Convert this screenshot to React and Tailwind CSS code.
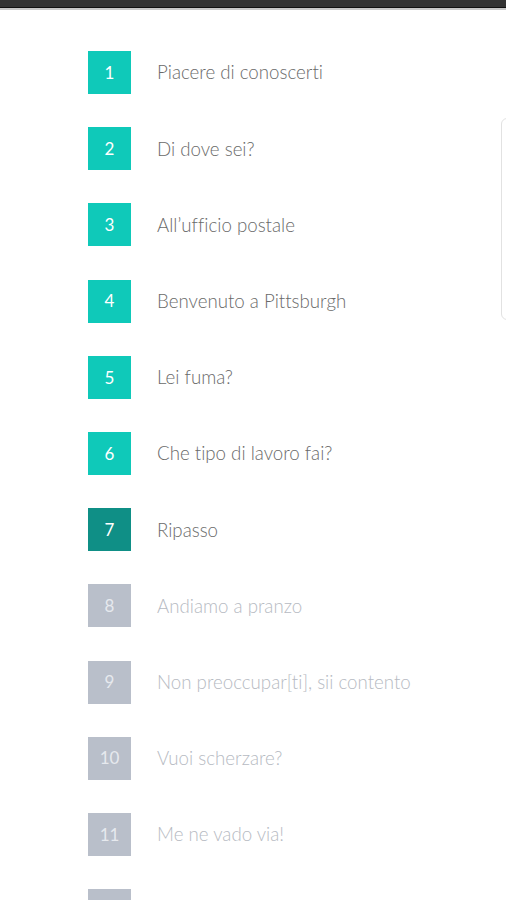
import React from 'react';

const lessons = [
  { n: 1, title: 'Piacere di conoscerti', state: 'done' },
  { n: 2, title: 'Di dove sei?', state: 'done' },
  { n: 3, title: 'All’ufficio postale', state: 'done' },
  { n: 4, title: 'Benvenuto a Pittsburgh', state: 'done' },
  { n: 5, title: 'Lei fuma?', state: 'done' },
  { n: 6, title: 'Che tipo di lavoro fai?', state: 'done' },
  { n: 7, title: 'Ripasso', state: 'current' },
  { n: 8, title: 'Andiamo a pranzo', state: 'locked' },
  { n: 9, title: 'Non preoccupar[ti], sii contento', state: 'locked' },
  { n: 10, title: 'Vuoi scherzare?', state: 'locked' },
  { n: 11, title: 'Me ne vado via!', state: 'locked' },
  { n: 12, title: 'Che cosa hai fatto ieri?', state: 'locked' },
];

const boxColor = {
  done: 'bg-[#0fc9b9]',
  current: 'bg-[#0f8f86]',
  locked: 'bg-[#b9bfca]',
};

const App = () => {
  return (
    <div className="relative h-[900px] w-[506px] overflow-hidden bg-white font-['Lato',sans-serif] [font-variant-ligatures:none]">
      {/* top status strip */}
      <div className="h-[7px] bg-[#333333]" />
      <div className="h-[1px] bg-[#111111]" />
      <div className="h-[2px] bg-[#c8c8c8]" />

      {/* peeking card on the right */}
      <div className="absolute left-[501px] top-[118px] h-[202px] w-[40px] rounded-l-md border border-[#e2e2e2] bg-white" />

      <ul className="flex flex-col gap-[33.2px] pl-[88px] pt-[41px]">
        {lessons.map((lesson) => (
          <li key={lesson.n} className="flex h-[43px] items-center">
            <div
              className={`flex h-[43px] w-[43px] shrink-0 items-center justify-center text-[17px] ${
                lesson.state === 'locked' ? 'text-[#e6e9ee]' : 'text-white'
              } ${boxColor[lesson.state]}`}
            >
              {lesson.n}
            </div>
            <span
              className={`ml-[26px] whitespace-nowrap text-[18.7px] font-light ${
                lesson.state === 'locked' ? 'text-[#b6bac2]' : 'text-[#6a6a6a]'
              }`}
            >
              {lesson.title}
            </span>
          </li>
        ))}
      </ul>
    </div>
  );
};

export default App;
